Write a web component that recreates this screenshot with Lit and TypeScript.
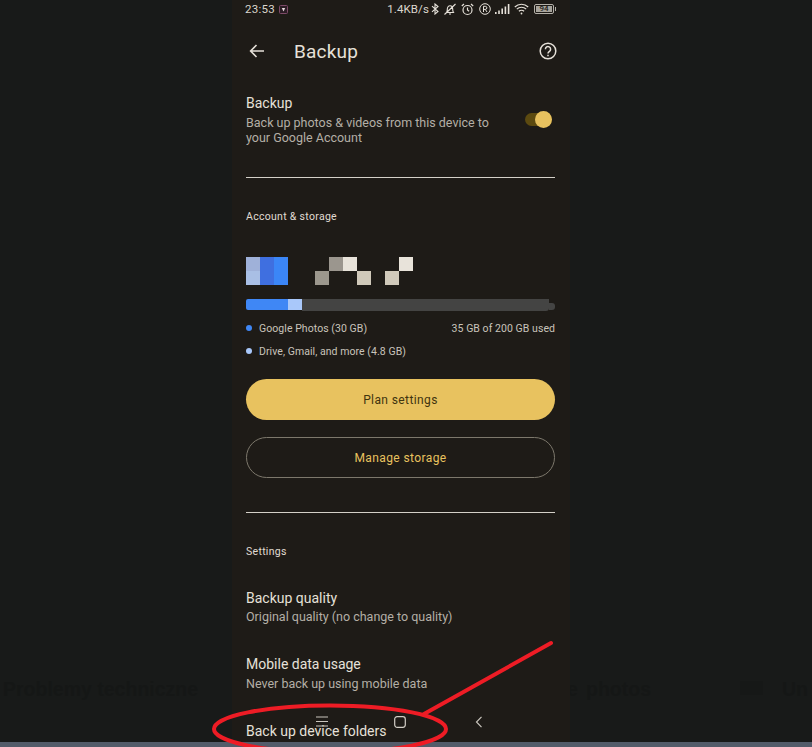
import { LitElement, css, html, svg } from 'lit'
import { customElement } from 'lit/decorators.js'

// columns 3 and 8 of the grid are spacers
const EMAIL_CELLS: [number, number, string][] = [
    [0, 0, '#9fb1d9'], [0, 1, '#a9bfe5'],
    [1, 0, '#3f6fe0'], [1, 1, '#3f6fe0'],
    [2, 0, '#3b86f7'], [2, 1, '#3b86f7'],
    [4, 1, '#9c978d'],
    [5, 0, '#9b968e'],
    [6, 0, '#e8e3da'],
    [7, 1, '#d0c9ba'],
    [9, 1, '#d0c9ba'],
    [10, 0, '#e8e3da'],
]

@customElement('app-root')
export class AppRoot extends LitElement {
    render() {
        return html`
            <div class="page">
                <div class="ghost">
                    <span class="ghost-a">Problemy techniczne</span>
                    <span class="ghost-e">e</span>
                    <span class="ghost-b">photos</span>
                    <i class="ghost-icon"></i>
                    <span class="ghost-c">Un</span>
                </div>
                <div class="phone">
                    ${this._statusBar()}
                    <header class="appbar">
                        <svg class="back" width="16" height="14" viewBox="0 0 16 14" fill="none" stroke="#e6e1d9" stroke-width="1.6">
                            <path d="M15 7H2M7.5 1 1.6 7l5.9 6"/>
                        </svg>
                        <span class="title">Backup</span>
                        <svg class="help" width="18" height="18" viewBox="0 0 18 18" fill="none" stroke="#e6e1d9" stroke-width="1.5">
                            <circle cx="9" cy="9" r="7.8"/>
                            <path d="M6.4 7.2a2.6 2.6 0 1 1 4.1 2.1c-1 .7-1.5 1.100-1.500 2.300"/>
                            <path d="M9 12.700v1.500"/>
                        </svg>
                    </header>
                    <section class="backup">
                        <div class="backup-text">
                            <div class="row-title">Backup</div>
                            <div class="row-sub">Back up photos &amp; videos from this device to your Google Account</div>
                        </div>
                        <div class="toggle"><span class="knob"></span></div>
                    </section>
                    <div class="divider first"></div>
                    <div class="section-label account">Account &amp; storage</div>
                    <div class="email">
                        ${EMAIL_CELLS.map(([col, row, color]) => html`
                            <span style="grid-column:${col + 1};grid-row:${row + 1};background:${color}"></span>
                        `)}
                    </div>
                    <div class="bar">
                        <span class="bar-photos"></span>
                        <span class="bar-drive"></span>
                        <span class="bar-rest"></span>
                        <span class="bar-end"></span>
                    </div>
                    <div class="legend first-legend">
                        <span class="dot photos"></span>
                        <span class="legend-text">Google Photos (30 GB)</span>
                        <span class="used">35 GB of 200 GB used</span>
                    </div>
                    <div class="legend second-legend">
                        <span class="dot drive"></span>
                        <span class="legend-text">Drive, Gmail, and more (4.8 GB)</span>
                    </div>
                    <div class="btn filled">Plan settings</div>
                    <div class="btn outlined">Manage storage</div>
                    <div class="divider second"></div>
                    <div class="section-label settings">Settings</div>
                    <div class="setting quality">
                        <div class="row-title">Backup quality</div>
                        <div class="row-sub">Original quality (no change to quality)</div>
                    </div>
                    <div class="setting mobile">
                        <div class="row-title">Mobile data usage</div>
                        <div class="row-sub">Never back up using mobile data</div>
                    </div>
                    <div class="row-title folders">Back up device folders</div>
                    ${this._navKeys()}
                </div>
            </div>
            <div class="strip"></div>
            ${this._annotation()}
        `
    }

    private _statusBar() {
        return html`
            <div class="status">
                <span class="time">23:53</span>
                <svg width="9" height="9" viewBox="0 0 9 9">
                    <rect x=".5" y=".5" width="8" height="8" rx="1" fill="#2a1c24" stroke="#7d4a68"/>
                    <path d="M2.800 3h3.400L4.500 6.500z" fill="#e8dde0"/>
                </svg>
                <span class="speed">1.4KB/s</span>
                <svg class="s-bt" width="8" height="12" viewBox="0 0 8 12" fill="none" stroke="#e6e1d9" stroke-width="1.100">
                    <path d="M1 3.200 7 8.500 4 11V1l3 2.500L1 8.800"/>
                </svg>
                <svg class="s-mute" width="14" height="13" viewBox="0 0 14 13" fill="none" stroke="#e6e1d9" stroke-width="1.100">
                    <path d="M3.500 9.500c.8-1 .8-2 .8-3.300C4.300 4.200 5.400 2.800 7 2.800s2.700 1.400 2.700 3.400c0 1.300 0 2.300.8 3.300zM6 11h2M1.500 11.500 12.500 1"/>
                </svg>
                <svg class="s-alarm" width="13" height="13" viewBox="0 0 13 13" fill="none" stroke="#e6e1d9" stroke-width="1.200">
                    <circle cx="6.500" cy="7" r="4.500"/>
                    <path d="M6.500 4.500V7l1.600 1.200M.8 3 3 1M12.200 3 10 1"/>
                </svg>
                <svg class="s-r" width="12" height="12" viewBox="0 0 12 12" fill="none" stroke="#e6e1d9" stroke-width="1">
                    <circle cx="6" cy="6" r="5.300"/>
                    <path d="M4.500 9V3.300h1.800a1.500 1.500 0 0 1 0 3.100H4.500M6.300 6.400 8 9"/>
                </svg>
                <svg class="s-signal" width="15" height="10" viewBox="0 0 15 10" fill="#e6e1d9">
                    <rect x="0" y="8" width="1.600" height="2"/>
                    <rect x="3.200" y="6.500" width="1.600" height="3.500"/>
                    <rect x="6.400" y="4.500" width="1.600" height="5.500"/>
                    <rect x="9.600" y="2.500" width="1.600" height="7.500"/>
                    <rect x="12.800" y="0" width="1.600" height="10"/>
                </svg>
                <svg class="s-wifi" width="15" height="12" viewBox="0 0 15 12" fill="none" stroke="#e6e1d9" stroke-width="1.200">
                    <path d="M.8 4a9.500 9.500 0 0 1 13.400 0M2.800 6.200a6.600 6.600 0 0 1 9.400 0M4.900 8.300a3.700 3.700 0 0 1 5.200 0"/>
                    <circle cx="7.500" cy="10.500" r=".9" fill="#e6e1d9" stroke="none"/>
                </svg>
                <span class="battery"><span class="battery-fill">94</span></span>
            </div>
        `
    }

    private _navKeys() {
        return html`
            <svg class="nav-key nav-menu" width="12" height="11" viewBox="0 0 12 11" stroke="#c9c5bd" stroke-width="1.100">
                <path d="M0 1h12M0 5.500h12M0 10h12"/>
            </svg>
            <svg class="nav-key nav-home" width="12" height="12" viewBox="0 0 12 12" fill="none" stroke="#d2cec6" stroke-width="1.200">
                <rect x=".7" y=".7" width="10.600" height="10.600" rx="2.500"/>
            </svg>
            <svg class="nav-key nav-back" width="8" height="12" viewBox="0 0 8 12" fill="none" stroke="#c9c5bd" stroke-width="1.200">
                <path d="M6.500 .8 1.500 6l5 5.200"/>
            </svg>
        `
    }

    private _annotation() {
        return svg`
            <svg class="annotation" width="812" height="747" viewBox="0 0 812 747" fill="none" stroke="#ee1c25" stroke-width="4" stroke-linecap="round">
                <ellipse cx="330" cy="729" rx="116" ry="23.500"/>
                <path d="M424 714 551 643"/>
            </svg>
        `
    }

    static styles = css`
        :host {
            display: block;
            position: relative;
            width: 812px;
            height: 747px;
            overflow: hidden;
            font-family: Roboto, "Noto Sans", sans-serif;
        }

        .page {
            position: relative;
            height: 742px;
            background: #181a19;
            overflow: hidden;
        }

        .strip {
            height: 5px;
            background: #535c6a;
        }

        .ghost {
            position: absolute;
            inset: 0;
            font-family: "Liberation Sans", sans-serif;
            font-size: 19.500px;
            font-weight: 700;
            color: #151716;
        }

        .ghost span {
            position: absolute;
            top: 678px;
        }

        .ghost-a { left: 3px; }
        .ghost-e { left: 567px; }
        .ghost-b { left: 586px; }
        .ghost-c { left: 782px; }

        .ghost-icon {
            position: absolute;
            left: 740px;
            top: 681px;
            width: 23px;
            height: 14px;
            background: #161817;
        }

        .phone {
            position: relative;
            box-sizing: border-box;
            width: 338px;
            height: 742px;
            margin-left: 232px;
            padding: 0 15px 0 14px;
            background: #1e1b17;
            color: #e6e1d9;
        }

        .status {
            display: flex;
            align-items: center;
            height: 18px;
            font-size: 11.500px;
            color: #dbd6ce;
        }

        .status svg { flex: none; }

        .time {
            margin-left: -1px;
            margin-right: 4px;
            letter-spacing: .3px;
        }

        .speed {
            margin-left: auto;
            letter-spacing: .1px;
        }

        .s-bt { margin-left: 2px; }
        .s-mute { margin-left: 4px; }
        .s-alarm { margin-left: 4px; }
        .s-r { margin-left: 5px; }
        .s-signal { margin-left: 4px; }
        .s-wifi { margin-left: 4px; }

        .battery {
            position: relative;
            box-sizing: border-box;
            width: 20px;
            height: 10px;
            margin: 0 1px 0 5px;
            padding: 1px;
            border: 1px solid #b5b1a9;
            border-radius: 2px;
        }

        .battery::after {
            content: "";
            position: absolute;
            right: -3px;
            top: 2px;
            width: 1.500px;
            height: 4px;
            background: #b5b1a9;
        }

        .battery-fill {
            display: block;
            height: 100%;
            background: #a8a49c;
            color: #1e1b17;
            font-size: 8px;
            line-height: 6px;
            font-weight: 500;
            text-align: center;
        }

        .appbar {
            display: flex;
            align-items: center;
            height: 66px;
        }

        .back {
            flex: none;
            margin-left: 3px;
        }

        .title {
            margin-left: 29px;
            font-size: 19px;
            letter-spacing: .2px;
        }

        .help {
            flex: none;
            margin-left: auto;
            margin-right: -2px;
        }

        .backup {
            display: flex;
            align-items: flex-start;
            justify-content: space-between;
            margin-top: 9px;
        }

        .backup-text { width: 270px; }

        .row-title {
            font-size: 14px;
            line-height: 20px;
            color: #e6e1d9;
        }

        .row-sub {
            font-size: 12.500px;
            line-height: 15px;
            color: #b4afa6;
        }

        .backup .row-sub { margin-top: 2px; }

        .toggle {
            position: relative;
            flex: none;
            width: 27px;
            height: 13px;
            margin-top: 20px;
            margin-right: 3px;
            border-radius: 7px;
            background: #5c4a10;
        }

        .knob {
            position: absolute;
            right: 0;
            top: -2px;
            width: 17px;
            height: 17px;
            border-radius: 50%;
            background: #e8c25f;
        }

        .divider {
            height: 1px;
            background: #d4d0c8;
        }

        .divider.first { margin-top: 32px; }
        .divider.second { margin-top: 34px; }

        .section-label {
            font-size: 10.500px;
            line-height: 14px;
            letter-spacing: .3px;
            color: #e0dbd3;
        }

        .section-label.account { margin-top: 32px; }
        .section-label.settings { margin-top: 32px; }

        .email {
            display: grid;
            grid-template-columns: repeat(3, 14px) 27px repeat(4, 14px) 14px repeat(2, 14px);
            grid-template-rows: repeat(2, 14px);
            margin-top: 33px;
        }

        .bar {
            display: flex;
            align-items: flex-start;
            margin-top: 14px;
            height: 12px;
        }

        .bar span { display: block; }

        .bar-photos {
            width: 42px;
            height: 11px;
            border-radius: 2px 0 0 2px;
            background: #3f87f5;
        }

        .bar-drive {
            width: 14px;
            height: 11px;
            background: #a9c8fa;
        }

        .bar-rest {
            width: 247px;
            height: 12px;
            border-radius: 0 0 3px 0;
            background: #444443;
        }

        .bar-end {
            width: 6px;
            height: 7px;
            margin-top: 4px;
            border-radius: 0 3px 3px 0;
            background: #444443;
        }

        .legend {
            display: flex;
            align-items: center;
            height: 14px;
            font-size: 10.500px;
            letter-spacing: .06px;
            color: #c9c4bb;
        }

        .first-legend { margin-top: 10px; }
        .second-legend { margin-top: 9px; }

        .dot {
            flex: none;
            width: 6px;
            height: 6px;
            margin-right: 7px;
            border-radius: 50%;
        }

        .dot.photos { background: #3f87f5; }
        .dot.drive { background: #a9c8fa; }

        .used { margin-left: auto; }

        .btn {
            display: flex;
            align-items: center;
            justify-content: center;
            box-sizing: border-box;
            height: 41px;
            border-radius: 21px;
            font-size: 12px;
            letter-spacing: .4px;
        }

        .filled {
            margin-top: 21px;
            background: #e8c25f;
            color: #40340f;
        }

        .outlined {
            margin-top: 17px;
            border: 1px solid #7d786c;
            color: #e8c25f;
        }

        .setting .row-sub { margin-top: 2px; }
        .setting.quality .row-sub { margin-top: 1px; }
        .quality { margin-top: 29px; }
        .mobile { margin-top: 30px; }

        .folders { margin-top: 30px; }

        .nav-key { position: absolute; }
        .nav-menu { left: 84px; top: 716px; }
        .nav-home { left: 162px; top: 716px; }
        .nav-back { left: 243px; top: 716px; }

        .annotation {
            position: absolute;
            left: 0;
            top: 0;
            pointer-events: none;
        }
    `
}

declare global {
    interface HTMLElementTagNameMap {
        'app-root': AppRoot
    }
}
